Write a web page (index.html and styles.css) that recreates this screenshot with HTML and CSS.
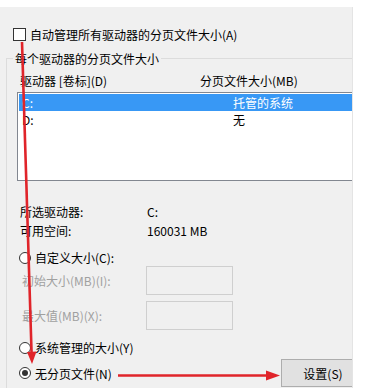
FILE: index.html
```html
<!DOCTYPE html>
<html>
<head>
<meta charset="utf-8">
<link rel="stylesheet" href="styles.css">
</head>
<body>
<div class="dialog">
  <div class="check-row"><span class="checkbox"></span><span class="lbl">自动管理所有驱动器的分页文件大小(A)</span></div>
  <fieldset class="group">
    <legend>每个驱动器的分页文件大小</legend>
    <div class="list-head"><span class="h1">驱动器 [卷标](D)</span><span class="h2">分页文件大小(MB)</span></div>
    <div class="listbox">
      <div class="row selected"><span class="c1">C:</span><span class="c2">托管的系统</span></div>
      <div class="row"><span class="c1">D:</span><span class="c2">无</span></div>
    </div>
    <div class="info">
      <span>所选驱动器:</span><span>C:</span>
      <span>可用空间:</span><span>160031 MB</span>
    </div>
    <div class="radio-row first"><span class="radio"></span><span class="lbl">自定义大小(C):</span></div>
    <div class="size-row"><span class="dis">初始大小(MB)(I):</span><span class="box"></span></div>
    <div class="size-row second"><span class="dis">最大值(MB)(X):</span><span class="box"></span></div>
    <div class="radio-row sys"><span class="radio"></span><span class="lbl">系统管理的大小(Y)</span></div>
    <div class="last-row">
      <div class="radio-row"><span class="radio on"></span><span class="lbl">无分页文件(N)</span></div>
      <div class="btn">设置(S)</div>
    </div>
  </fieldset>
</div>
<svg class="arrows" width="365" height="392" viewBox="0 0 365 392">
  <line x1="22" y1="42" x2="31.6" y2="354" stroke="#e0242a" stroke-width="2.6"/>
  <polygon points="27,352 36.5,351.5 32,364" fill="#e0242a"/>
  <line x1="118" y1="375.5" x2="268" y2="375.5" stroke="#e0242a" stroke-width="2.6"/>
  <polygon points="266,370.5 266,380.5 280,375.5" fill="#e0242a"/>
</svg>
</body>
</html>
```
FILE: styles.css
```css
html, body {
  margin: 0;
  padding: 0;
  background: #ffffff;
}
body {
  position: relative;
  width: 365px;
  height: 392px;
  overflow: hidden;
  font-family: "Noto Sans CJK SC", "Noto Sans", sans-serif;
  font-size: 12px;
  color: #000;
}
.dialog {
  margin-top: 7px;
  width: 353px;
  height: 381px;
  background: #f0f0f0;
  overflow: hidden;
  box-sizing: border-box;
  border-right: 1px solid #e4e4e4;
}
.check-row {
  display: flex;
  align-items: center;
  height: 19px;
  padding-top: 18px;
  padding-left: 13px;
  line-height: 19px;
}
.checkbox {
  width: 13px;
  height: 13px;
  box-sizing: border-box;
  border: 1px solid #333;
  background: #fff;
}
.check-row .lbl {
  margin-left: 4px;
}
.group {
  margin: 5px 0 0 6px;
  padding: 0;
  border: 1px solid #dcdcdc;
  border-right: none;
  border-bottom: none;
  min-width: 0;
  height: 400px;
}
.group legend {
  margin-left: 6px;
  padding: 0 2px;
  line-height: 19px;
  height: 19px;
}
.list-head {
  display: flex;
  margin-top: 3px;
  margin-left: 13px;
  height: 19px;
  line-height: 19px;
}
.list-head .h1 {
  width: 180px;
}
.listbox {
  margin-top: 2px;
  margin-left: 10px;
  width: 360px;
  height: 89px;
  box-sizing: border-box;
  border: 1px solid #828790;
  background: #fff;
  padding: 1px;
}
.row {
  display: flex;
  height: 17px;
  line-height: 17px;
  padding-left: 3px;
}
.row.selected {
  background: #3898f5;
  color: #fff;
}
.row .c1 {
  width: 211px;
}
.info {
  display: grid;
  grid-template-columns: 127px auto;
  grid-auto-rows: 19px;
  line-height: 19px;
  margin-top: 21px;
  margin-left: 13px;
}
.radio-row {
  display: flex;
  align-items: center;
  height: 17px;
  line-height: 17px;
  margin-left: 12px;
}
.radio-row.first {
  margin-top: 9px;
}
.radio-row.sys {
  margin-top: 9px;
}
.radio {
  width: 12px;
  height: 12px;
  box-sizing: border-box;
  border: 1px solid #333;
  border-radius: 50%;
  background: #fff;
  display: flex;
  align-items: center;
  justify-content: center;
}
.radio.on::after {
  content: "";
  width: 6px;
  height: 6px;
  border-radius: 50%;
  background: #333;
}
.radio-row .lbl {
  margin-left: 4px;
}
.size-row {
  display: flex;
  align-items: center;
  height: 29px;
  margin-left: 15px;
}
.size-row.second {
  margin-top: 6px;
}
.size-row .dis {
  width: 124px;
  color: #a0a0a0;
}
.box {
  width: 87px;
  height: 29px;
  box-sizing: border-box;
  border: 1px solid #cfcfcf;
  background: #f0f0f0;
}
.last-row {
  display: flex;
  align-items: center;
  justify-content: space-between;
  margin-top: 3px;
  height: 28px;
  width: 358px;
}
.btn {
  width: 84px;
  height: 28px;
  box-sizing: border-box;
  border: 1px solid #adadad;
  background: #e1e1e1;
  display: flex;
  align-items: center;
  justify-content: center;
  line-height: 17px;
}
.arrows {
  position: absolute;
  left: 0;
  top: 0;
}
```
